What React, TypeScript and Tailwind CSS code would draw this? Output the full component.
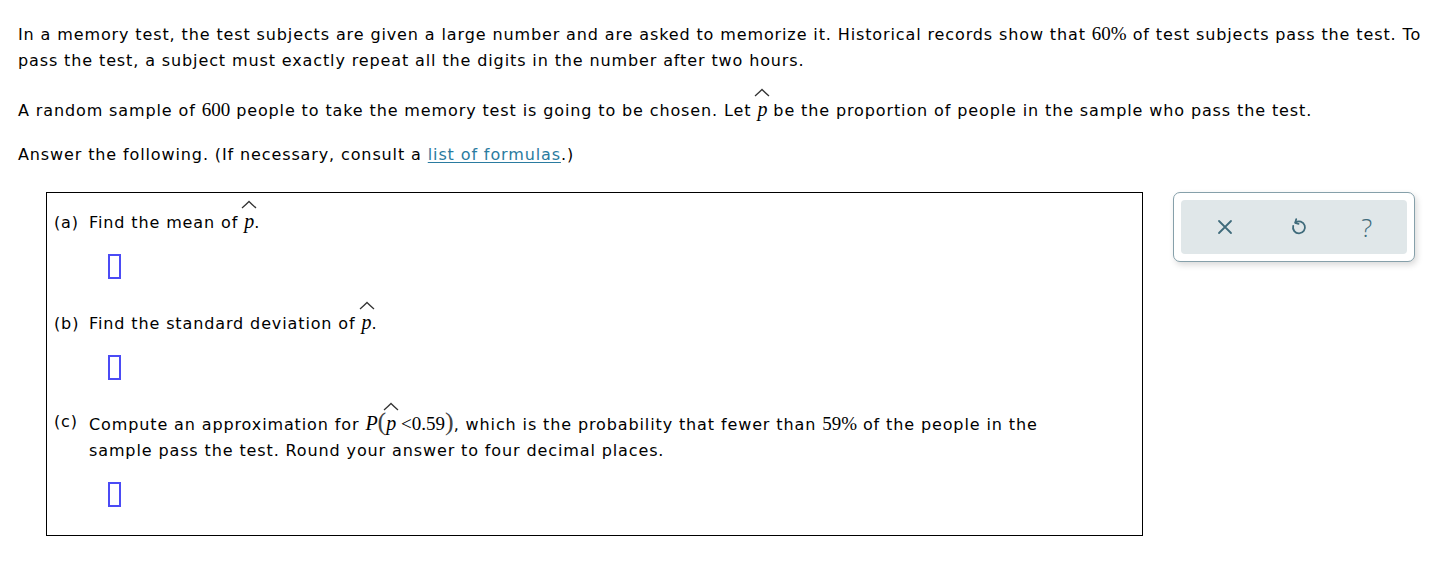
import React from "react";

const serif = "font-['Liberation_Serif',serif] tracking-normal leading-none";

function PHat() {
  return (
    <span className="relative inline-block leading-none">
      <svg
        className="absolute left-1/2 -translate-x-1/2 -top-[11px]"
        width="17"
        height="9"
        viewBox="0 0 17 9"
      >
        <path d="M1.5 8 Q5 5 8.5 1.5 Q12 5 15.5 8" fill="none" stroke="#333" strokeWidth="1.3" />
      </svg>
      <span className={`${serif} italic text-[20px]`}>p</span>
    </span>
  );
}

function Num({ children }: { children: React.ReactNode }) {
  return <span className={`${serif} text-[19px]`}>{children}</span>;
}

function AnswerBox() {
  return <div className="ml-[54px] mt-[18px] h-[25px] w-[13px] border-2 border-[#4b4bf5]" />;
}

function Part({
  label,
  children,
}: {
  label: string;
  children: React.ReactNode;
}) {
  return (
    <div className="flex">
      <span className="w-[35px] shrink-0">{label}</span>
      <div>{children}</div>
    </div>
  );
}

export default function App() {
  return (
    <div className="min-h-screen bg-white text-black font-['DejaVu_Sans',Verdana,sans-serif] text-[16px] leading-[26px] tracking-[0.88px] px-[18px] pt-[22px]">
      <p>
        In a memory test, the test subjects are given a large number and are asked to memorize it.
        Historical records show that <Num>60%</Num> of test subjects pass the test. To pass the
        test, a subject must exactly repeat all the digits in the number after two hours.
      </p>
      <p className="mt-[24px]">
        A random sample of <Num>600</Num> people to take the memory test is going to be chosen. Let{" "}
        <PHat /> be the proportion of people in the sample who pass the test.
      </p>
      <p className="mt-[18px]">
        Answer the following. (If necessary, consult a{" "}
        <a href="#" className="text-[#2a7ba0] underline underline-offset-2">
          list of formulas
        </a>
        .)
      </p>

      <div className="mt-[24px] flex items-start gap-[30px]">
        <div className="ml-[28px] w-[1097px] h-[344px] border border-black pl-[7px] pt-[17px]">
          <Part label="(a)">
            Find the mean of <PHat />.
          </Part>
          <AnswerBox />

          <div className="mt-[32px]">
            <Part label="(b)">
              Find the standard deviation of <PHat />.
            </Part>
            <AnswerBox />
          </div>

          <div className="mt-[29px]">
            <Part label="(c)">
              Compute an approximation for{" "}
              <span className={`${serif} italic text-[20px]`}>P</span>
              <span className={`${serif} text-[26px] text-[#444]`}>(</span>
              <PHat />
              <span className={`${serif} text-[19px]`}> &lt;0.59</span>
              <span className={`${serif} text-[26px] text-[#444]`}>)</span>, which is the
              probability that fewer than <Num>59%</Num> of the people in the
              <br />
              sample pass the test. Round your answer to four decimal places.
            </Part>
            <AnswerBox />
          </div>
        </div>

        <div className="w-[242px] h-[70px] rounded-[7px] border border-[#86a0aa] bg-white p-[7px] shadow-[2px_3px_6px_rgba(0,0,0,0.15)]">
          <div className="h-full rounded-[4px] bg-[#e0e7e9] flex items-center justify-around px-[8px] text-[#3f6b7b]">
            <svg width="18" height="18" viewBox="0 0 18 18">
              <path d="M3 3 L15 15 M15 3 L3 15" stroke="currentColor" strokeWidth="1.8" strokeLinecap="round" />
            </svg>
            <svg width="20" height="20" viewBox="0 0 20 20" fill="none" stroke="currentColor" strokeWidth="1.8" strokeLinecap="round" strokeLinejoin="round">
              <path d="M7.5 5.5 A6 6 0 1 1 5.2 8.8" />
              <path d="M8.2 2.2 L7.2 5.8 L10.6 6.8" />
            </svg>
            <span className="font-['Open_Sans',sans-serif] text-[26px] font-light leading-none tracking-normal">?</span>
          </div>
        </div>
      </div>
    </div>
  );
}
